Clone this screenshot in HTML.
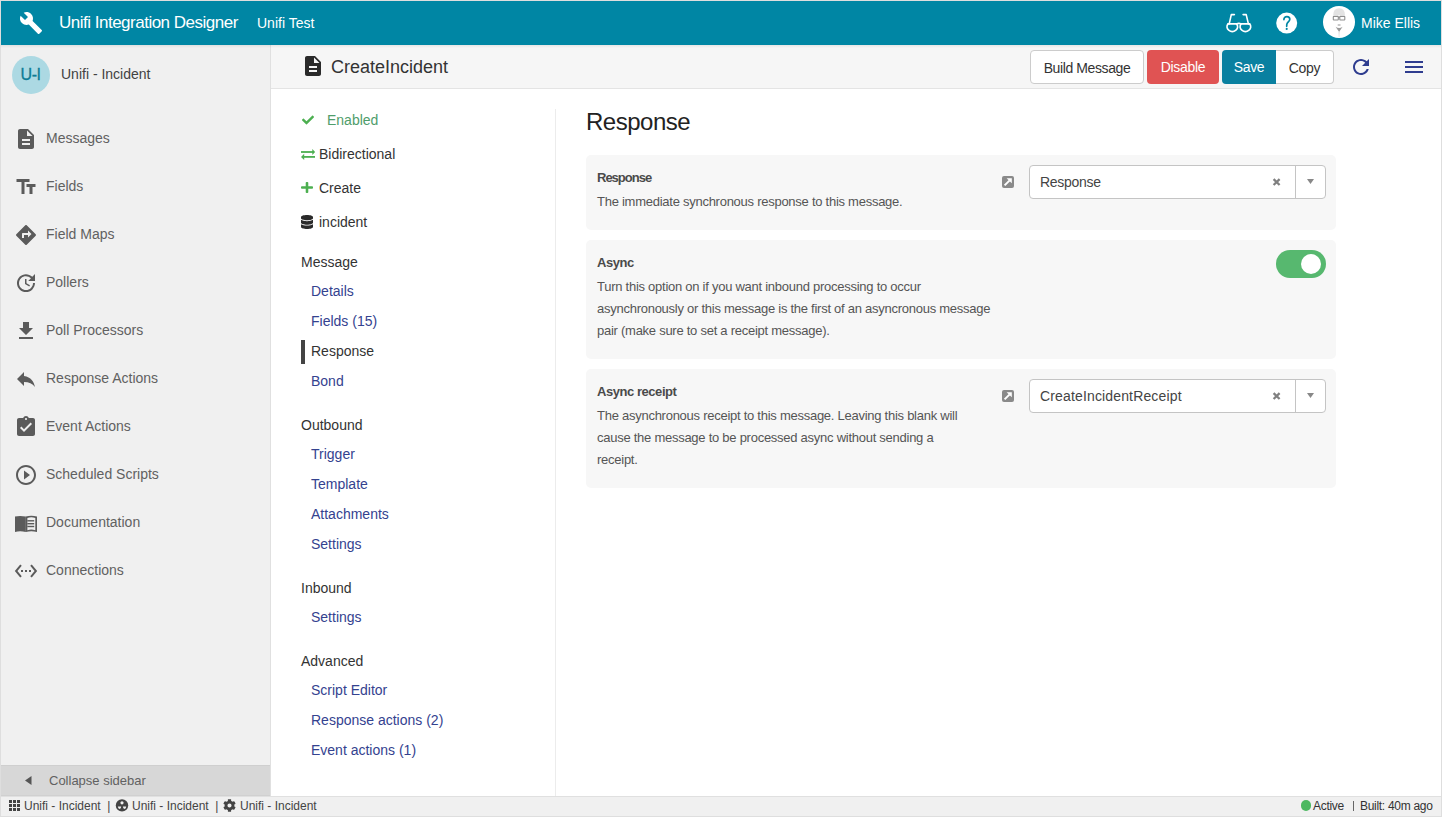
<!DOCTYPE html>
<html><head><meta charset="utf-8">
<style>
*{box-sizing:border-box;margin:0;padding:0}
html,body{width:1442px;height:817px;overflow:hidden;background:#fff;font-family:"Liberation Sans",sans-serif;position:relative}
.a{position:absolute}
.t{position:absolute;white-space:nowrap;line-height:1}
.nav{color:#616161;font-size:14px;left:46px}
.ni{position:absolute;left:14px;width:24px;height:24px}
.mn{position:absolute;font-size:14px;white-space:nowrap;line-height:1;left:311px}
.lnk{color:#34428f}
.hd{color:#333;left:301px}
.card{position:absolute;left:586px;width:750px;background:#f7f7f7;border-radius:5px}
.lbl{position:absolute;left:11px;font-size:13px;font-weight:bold;color:#4a4a4a;white-space:nowrap;line-height:1;letter-spacing:-0.3px}
.desc{position:absolute;left:11px;font-size:13px;color:#555;line-height:22px;white-space:nowrap;letter-spacing:-0.26px}
.sel{position:absolute;left:443px;top:10px;width:297px;height:34px;background:#fff;border:1px solid #c4c4c4;border-radius:4px}
.btn{position:absolute;top:50px;height:34px;font-size:14px;line-height:34px;text-align:center;white-space:nowrap}
</style></head><body>
<!-- top bar -->
<div class="a" style="left:1px;top:1px;width:1440px;height:44px;background:#0086a4"></div>
<svg class="a" style="left:19px;top:11px" width="24" height="24" viewBox="0 0 24 24"><path fill="#fff" d="M22.7 19l-9.1-9.1c.9-2.3.4-5-1.5-6.9-2-2-5-2.4-7.4-1.3L9 6 6 9 1.6 4.7C.4 7.1.9 10.1 2.9 12.1c1.9 1.9 4.6 2.4 6.9 1.5l9.1 9.1c.4.4 1 .4 1.4 0l2.3-2.3c.5-.4.5-1.1.1-1.4z"/></svg>
<div class="t" style="left:59px;top:14px;font-size:17px;color:#fff;letter-spacing:-0.5px">Unifi Integration Designer</div>
<div class="t" style="left:257px;top:16px;font-size:14px;color:#fff">Unifi Test</div>
<!-- glasses -->
<svg class="a" style="left:1222px;top:10px" width="34" height="26" viewBox="0 0 34 26"><g fill="none" stroke="#fff" stroke-width="1.6" stroke-linejoin="round" stroke-linecap="round"><path d="M6.1 13.9A5.35 4.65 0 1 0 14.5 13.9"/><path d="M19.2 13.9A5.35 4.65 0 1 0 27.6 13.9"/><path d="M6.1 13.9H14.5Q16.85 12.9 19.2 13.9H27.6"/><path d="M7.2 13.9L9.3 4.6H12.4"/><path d="M26.4 13.9L24.2 4.6H21.1"/></g></svg>
<!-- help -->
<svg class="a" style="left:1275px;top:12px" width="23" height="22" viewBox="0 0 23 22"><circle cx="11.7" cy="11.05" r="10.5" fill="#fff"/><path d="M8.9 7.6C8.9 5.6 10.2 4.6 11.9 4.6C13.7 4.6 14.8 5.8 14.8 7.3C14.8 9.5 12.2 10.2 11.8 12.4L11.7 14.2" fill="none" stroke="#0086a4" stroke-width="1.7" stroke-linecap="round"/><circle cx="11.7" cy="16.9" r="1.05" fill="#0086a4"/></svg>
<!-- avatar -->
<div class="a" style="left:1323px;top:6px;width:32px;height:32px;border-radius:50%;background:#fff;overflow:hidden">
  <svg width="32" height="32" viewBox="0 0 32 32"><path d="M10.2 9.2Q10.2 2.2 16.1 2.2Q22 2.2 22 9.2z" fill="#e3e3e3"/><g fill="none" stroke="#8e8e8e" stroke-width="1.1"><rect x="10.3" y="10.4" width="5" height="3.6" rx=".6"/><rect x="16.8" y="10.4" width="5" height="3.6" rx=".6"/><path d="M15.3 11.2h1.5"/></g><rect x="14.7" y="18" width="2.8" height="2" fill="#c9c9c9"/><path d="M12.6 20.8Q16.1 23.2 19.6 20.8L16.1 26z" fill="#9b9b9b"/><path d="M15.3 26h1.6l-.4 5h-.8z" fill="#e6e6e6"/></svg>
</div>
<div class="t" style="left:1361px;top:16px;font-size:14px;color:#fff">Mike Ellis</div>

<!-- sidebar -->
<div class="a" style="left:1px;top:45px;width:269px;height:751px;background:#f0f0f0"></div>
<div class="a" style="left:270px;top:45px;width:1px;height:751px;background:#e0e0e0"></div>
<div class="a" style="left:12px;top:56px;width:38px;height:38px;border-radius:50%;background:#acd9e3"></div>
<div class="t" style="left:11.5px;top:67px;width:38px;text-align:center;font-size:16px;color:#0f7d96;letter-spacing:-0.5px;-webkit-text-stroke:0.3px #0f7d96">U-I</div>
<div class="t" style="left:61px;top:67px;font-size:14px;color:#424242">Unifi - Incident</div>

<svg class="ni" style="top:127px" viewBox="0 0 24 24"><path fill="#5b5b5b" d="M14 2H6c-1.1 0-1.99.9-1.99 2L4 20c0 1.1.89 2 1.99 2H18c1.1 0 2-.9 2-2V8l-6-6zm2 16H8v-2h8v2zm0-4H8v-2h8v2zm-3-5V3.5L18.5 9H13z"/></svg>
<div class="t nav" style="top:131px">Messages</div>
<svg class="ni" style="top:175px" viewBox="0 0 24 24"><path fill="#5b5b5b" d="M2.5 4v3h5v12h3V7h5V4h-13zm19 5h-9v3h3v7h3v-7h3V9z"/></svg>
<div class="t nav" style="top:179px">Fields</div>
<svg class="ni" style="top:223px" viewBox="0 0 24 24"><path fill="#5b5b5b" d="M21.71 11.29l-9-9c-.39-.39-1.02-.39-1.41 0l-9 9c-.39.39-.39 1.02 0 1.41l9 9c.39.39 1.02.39 1.41 0l9-9c.39-.38.39-1.01 0-1.41zM14 14.5V12h-4v3H8v-4c0-.55.45-1 1-1h5V7.5l3.5 3.5-3.5 3.5z"/></svg>
<div class="t nav" style="top:227px">Field Maps</div>
<svg class="ni" style="top:271px" viewBox="0 0 24 24"><path fill="#5b5b5b" d="M21 10.12h-6.78l2.74-2.82c-2.73-2.7-7.15-2.8-9.88-.1-2.730 2.710-2.730 7.080 0 9.790s7.150 2.710 9.880 0C18.320 15.650 19 14.080 19 12.100h2c0 1.980-.88 4.550-2.640 6.290-3.510 3.480-9.210 3.480-12.720 0-3.500-3.470-3.530-9.110-.02-12.580s9.140-3.470 12.650 0L21 3v7.120zM12.500 8v4.250l3.500 2.080-.72 1.210L11 13V8h1.500z"/></svg>
<div class="t nav" style="top:275px">Pollers</div>
<svg class="ni" style="top:319px" viewBox="0 0 24 24"><path fill="#5b5b5b" d="M19 9h-4V3H9v6H5l7 7 7-7zM5 18v2h14v-2H5z"/></svg>
<div class="t nav" style="top:323px">Poll Processors</div>
<svg class="ni" style="top:367px" viewBox="0 0 24 24"><path fill="#5b5b5b" d="M10 9V5l-7 7 7 7v-4.1c5 0 8.5 1.6 11 5.1-1-5-4-10-11-11z"/></svg>
<div class="t nav" style="top:371px">Response Actions</div>
<svg class="ni" style="top:415px" viewBox="0 0 24 24"><path fill="#5b5b5b" d="M19 3h-4.18C14.4 1.84 13.3 1 12 1c-1.3 0-2.4.84-2.82 2H5c-1.1 0-2 .9-2 2v14c0 1.1.9 2 2 2h14c1.1 0 2-.9 2-2V5c0-1.1-.9-2-2-2zm-7 0c.55 0 1 .45 1 1s-.45 1-1 1-1-.45-1-1 .45-1 1-1zm-2 14l-4-4 1.41-1.41L10 14.17l6.59-6.59L18 9l-8 8z"/></svg>
<div class="t nav" style="top:419px">Event Actions</div>
<svg class="ni" style="top:463px" viewBox="0 0 24 24"><path fill="#5b5b5b" d="M10 16.5l6-4.5-6-4.5v9zM12 2C6.48 2 2 6.48 2 12s4.48 10 10 10 10-4.48 10-10S17.52 2 12 2zm0 18c-4.41 0-8-3.59-8-8s3.59-8 8-8 8 3.59 8 8-3.59 8-8 8z"/></svg>
<div class="t nav" style="top:467px">Scheduled Scripts</div>
<svg class="ni" style="top:511px" viewBox="0 0 24 24"><g fill="#5b5b5b"><path d="M1 5.6Q6 4.2 11.8 5.6V21Q6 19.6 1 21Z"/><path fill-rule="evenodd" d="M11.7 5.6Q17.3 3.9 23 5.6V21.1Q17.3 19.5 11.7 21.1ZM13.4 7V19.2Q17.3 18 21.3 19.2V7Q17.3 5.6 13.4 7Z"/><rect x="13.3" y="9.1" width="6.9" height="1.4"/><rect x="13.3" y="12" width="6.9" height="1.4"/><rect x="13.3" y="14.8" width="6.9" height="1.4"/></g></svg>
<div class="t nav" style="top:515px">Documentation</div>
<svg class="ni" style="top:559px" viewBox="0 0 24 24"><path fill="#5b5b5b" d="M7.77 6.76L6.23 5.48.82 12l5.41 6.52 1.54-1.28L3.42 12l4.35-5.24zM7 13h2v-2H7v2zm10-2h-2v2h2v-2zm-6 2h2v-2h-2v2zm6.77-7.52l-1.54 1.28L20.58 12l-4.35 5.24 1.54 1.28L23.18 12l-5.41-6.52z"/></svg>
<div class="t nav" style="top:563px">Connections</div>

<div class="a" style="left:1px;top:765px;width:269px;height:31px;background:#d7d7d7;border-top:1px solid #cfcfcf;border-bottom:1px solid #d0d0d0"></div>
<svg class="a" style="left:25px;top:776px" width="7" height="9" viewBox="0 0 7 9"><path d="M6.5 0v9L0 4.5z" fill="#555"/></svg>
<div class="t" style="left:49px;top:774px;font-size:13px;color:#616161">Collapse sidebar</div>

<!-- sub header -->
<div class="a" style="left:271px;top:45px;width:1170px;height:43px;background:#f6f6f6"></div>
<div class="a" style="left:271px;top:88px;width:1170px;height:1px;background:#e4e4e4"></div>
<div class="a" style="left:1px;top:45px;width:1440px;height:3px;background:linear-gradient(rgba(0,0,0,0.07),rgba(0,0,0,0))"></div>
<svg class="a" style="left:301px;top:54px" width="24" height="24" viewBox="0 0 24 24"><path fill="#2a2a2a" d="M14 2H6c-1.1 0-1.99.9-1.99 2L4 20c0 1.1.89 2 1.99 2H18c1.1 0 2-.9 2-2V8l-6-6zm2 16H8v-2h8v2zm0-4H8v-2h8v2zm-3-5V3.5L18.5 9H13z"/></svg>
<div class="t" style="left:331px;top:58px;font-size:18px;color:#333">CreateIncident</div>

<div class="btn" style="left:1030px;width:114px;background:#fff;border:1px solid #ccc;border-radius:4px;color:#333;letter-spacing:-0.4px">Build Message</div>
<div class="btn" style="left:1147px;width:72px;background:#e05353;border-radius:4px;color:#fff;letter-spacing:-0.3px">Disable</div>
<div class="btn" style="left:1222px;width:54px;background:#0a80a0;border-radius:4px 0 0 4px;color:#fff;letter-spacing:-0.3px">Save</div>
<div class="btn" style="left:1276px;width:58px;background:#fff;border:1px solid #ccc;border-left:none;border-radius:0 4px 4px 0;color:#333;letter-spacing:-0.3px">Copy</div>
<svg class="a" style="left:1349px;top:55px" width="24" height="24" viewBox="0 0 24 24"><path fill="#2f3d8f" d="M17.65 6.35C16.2 4.9 14.21 4 12 4c-4.42 0-7.99 3.58-7.99 8s3.57 8 7.99 8c3.73 0 6.84-2.55 7.73-6h-2.08c-.82 2.33-3.04 4-5.65 4-3.31 0-6-2.690-6-6s2.690-6 6-6c1.660 0 3.140.690 4.220 1.780L13 11h7V4l-2.350 2.350z"/></svg>
<div class="a" style="left:1405px;top:61px;width:18px;height:2px;background:#2f3d8f"></div>
<div class="a" style="left:1405px;top:66px;width:18px;height:2px;background:#2f3d8f"></div>
<div class="a" style="left:1405px;top:71px;width:18px;height:2px;background:#2f3d8f"></div>

<!-- middle nav -->
<div class="a" style="left:555px;top:109px;width:1px;height:687px;background:#ececec"></div>
<svg class="a" style="left:302px;top:115px" width="12" height="10" viewBox="0 65 512 382"><path fill="#4caf50" d="M173.898 439.404l-166.4-166.4c-9.997-9.997-9.997-26.206 0-36.204l36.203-36.204c9.997-9.998 26.207-9.998 36.204 0L192 312.69 432.095 72.596c9.997-9.997 26.207-9.997 36.204 0l36.203 36.204c9.997 9.997 9.997 26.206 0 36.204l-294.4 294.401c-9.998 9.997-26.207 9.997-36.204-.001z"/></svg>
<div class="t" style="left:327px;top:113px;font-size:14px;color:#4f9d6b">Enabled</div>
<svg class="a" style="left:300px;top:148px" width="16" height="12" viewBox="0 0 16 12"><g fill="#4caf50"><rect x="1" y="3.1" width="12" height="1.8"/><path d="M12.3 0.9L15.1 4L12.3 7.1z"/><rect x="3.5" y="8" width="11.5" height="1.8"/><path d="M4.2 5.8L1 8.9L4.2 12z"/></g></svg>
<div class="t" style="left:319px;top:147px;font-size:14px;color:#333">Bidirectional</div>
<svg class="a" style="left:301px;top:182px" width="12" height="11" viewBox="0 32 448 448" preserveAspectRatio="none"><path fill="#4caf50" d="M416 208H272V64c0-17.67-14.33-32-32-32h-32c-17.67 0-32 14.33-32 32v144H32c-17.67 0-32 14.33-32 32v32c0 17.67 14.33 32 32 32h144v144c0 17.67 14.330 32 32 32h32c17.670 0 32-14.330 32-32V304h144c17.670 0 32-14.330 32-32v-32c0-17.670-14.330-32-32-32z"/></svg>
<div class="t" style="left:319px;top:181px;font-size:14px;color:#333">Create</div>
<svg class="a" style="left:301px;top:215px" width="12" height="14" viewBox="0 0 448 512" preserveAspectRatio="none"><path fill="#2a2a2a" d="M448 73.143v45.714C448 159.143 347.667 192 224 192S0 159.143 0 118.857V73.143C0 32.857 100.333 0 224 0s224 32.857 224 73.143zM448 176v102.857C448 319.143 347.667 352 224 352S0 319.143 0 278.857V176c48.125 33.143 136.208 48.572 224 48.572S399.874 209.143 448 176zm0 160v102.857C448 479.143 347.667 512 224 512S0 479.143 0 438.857V336c48.125 33.143 136.208 48.572 224 48.572S399.874 369.143 448 336z"/></svg>
<div class="t" style="left:319px;top:215px;font-size:14px;color:#333">incident</div>

<div class="mn hd" style="top:255px">Message</div>
<div class="mn lnk" style="top:284px">Details</div>
<div class="mn lnk" style="top:314px">Fields (15)</div>
<div class="a" style="left:301px;top:340px;width:4px;height:24px;background:#444"></div>
<div class="mn" style="top:344px;color:#333">Response</div>
<div class="mn lnk" style="top:374px">Bond</div>
<div class="mn hd" style="top:418px">Outbound</div>
<div class="mn lnk" style="top:447px">Trigger</div>
<div class="mn lnk" style="top:477px">Template</div>
<div class="mn lnk" style="top:507px">Attachments</div>
<div class="mn lnk" style="top:537px">Settings</div>
<div class="mn hd" style="top:581px">Inbound</div>
<div class="mn lnk" style="top:610px">Settings</div>
<div class="mn hd" style="top:654px">Advanced</div>
<div class="mn lnk" style="top:683px">Script Editor</div>
<div class="mn lnk" style="top:713px">Response actions (2)</div>
<div class="mn lnk" style="top:743px">Event actions (1)</div>

<!-- main -->
<div class="t" style="left:586px;top:110px;font-size:24px;color:#222;letter-spacing:-0.5px">Response</div>

<div class="card" style="top:155px;height:75px">
  <div class="lbl" style="top:16px;letter-spacing:-1px">Response</div>
  <div class="desc" style="top:36px">The immediate synchronous response to this message.</div>
  <div class="a" style="left:416px;top:21px;width:12px;height:12px;background:#8a8a8a;border-radius:2px"></div>
  <svg class="a" style="left:416px;top:21px" width="12" height="12" viewBox="0 0 12 12"><path d="M2.6 9.4L7.4 4.6" fill="none" stroke="#fff" stroke-width="2"/><path d="M4.6 2.2H9.8V7.2z" fill="#fff"/></svg>
  <div class="sel"><div class="t" style="left:10px;top:9px;font-size:14px;color:#444;letter-spacing:-0.3px">Response</div>
    <svg class="a" style="left:242px;top:12px" width="9" height="8" viewBox="0 0 9 8"><path d="M1.6 1.2L7.6 7M7.6 1.2L1.6 7" stroke="#808080" stroke-width="2.3"/></svg>
    <div class="a" style="left:265px;top:0;width:1px;height:32px;background:#c4c4c4"></div>
    <svg class="a" style="left:277px;top:13px" width="7" height="5" viewBox="0 0 7 5"><path d="M0 0h7L3.5 5z" fill="#888"/></svg>
  </div>
</div>

<div class="card" style="top:240px;height:119px">
  <div class="lbl" style="top:16px;letter-spacing:-0.45px">Async</div>
  <div class="desc" style="top:36px">Turn this option on if you want inbound processing to occur<br>asynchronously or this message is the first of an asyncronous message<br>pair (make sure to set a receipt message).</div>
  <div class="a" style="left:690px;top:10px;width:50px;height:28px;border-radius:14px;background:#57b86f"></div>
  <div class="a" style="left:714.8px;top:14px;width:20.3px;height:20.3px;border-radius:50%;background:#fff"></div>
</div>

<div class="card" style="top:369px;height:119px">
  <div class="lbl" style="top:16px;letter-spacing:-0.45px">Async receipt</div>
  <div class="desc" style="top:36px">The asynchronous receipt to this message. Leaving this blank will<br>cause the message to be processed async without sending a<br>receipt.</div>
  <div class="a" style="left:416px;top:21px;width:12px;height:12px;background:#8a8a8a;border-radius:2px"></div>
  <svg class="a" style="left:416px;top:21px" width="12" height="12" viewBox="0 0 12 12"><path d="M2.6 9.4L7.4 4.6" fill="none" stroke="#fff" stroke-width="2"/><path d="M4.6 2.2H9.8V7.2z" fill="#fff"/></svg>
  <div class="sel"><div class="t" style="left:10px;top:9px;font-size:14px;color:#444;letter-spacing:0.15px">CreateIncidentReceipt</div>
    <svg class="a" style="left:242px;top:12px" width="9" height="8" viewBox="0 0 9 8"><path d="M1.6 1.2L7.6 7M7.6 1.2L1.6 7" stroke="#808080" stroke-width="2.3"/></svg>
    <div class="a" style="left:265px;top:0;width:1px;height:32px;background:#c4c4c4"></div>
    <svg class="a" style="left:277px;top:13px" width="7" height="5" viewBox="0 0 7 5"><path d="M0 0h7L3.5 5z" fill="#888"/></svg>
  </div>
</div>

<!-- footer -->
<div class="a" style="left:1px;top:796px;width:1440px;height:20px;background:#f0f0f0;border-top:1px solid #e0e0e0"></div>
<svg class="a" style="left:9px;top:800px" width="11" height="11" viewBox="0 0 11 11"><g fill="#444"><rect x="0" y="0" width="3" height="3"/><rect x="4" y="0" width="3" height="3"/><rect x="8" y="0" width="3" height="3"/><rect x="0" y="4" width="3" height="3"/><rect x="4" y="4" width="3" height="3"/><rect x="8" y="4" width="3" height="3"/><rect x="0" y="8" width="3" height="3"/><rect x="4" y="8" width="3" height="3"/><rect x="8" y="8" width="3" height="3"/></g></svg>
<div class="t" style="left:24px;top:800px;font-size:12px;color:#444">Unifi - Incident&nbsp; |</div>
<svg class="a" style="left:115px;top:798px" width="14" height="14" viewBox="0 0 14 14"><circle cx="7" cy="7.4" r="6.2" fill="#444"/><circle cx="7" cy="4.8" r="1.6" fill="#f0f0f0"/><path d="M2.9 8.6H6.2Q6.1 10.9 4.55 11.1Q3 10.9 2.9 8.6Z" fill="#f0f0f0"/><path d="M7.9 8.6H11.2Q11.1 10.9 9.55 11.1Q8 10.9 7.9 8.6Z" fill="#f0f0f0"/></svg>
<div class="t" style="left:132px;top:800px;font-size:12px;color:#444">Unifi - Incident&nbsp; |</div>
<svg class="a" style="left:223px;top:799px" width="13" height="13" viewBox="0 0 512 512"><path fill="#444" d="M487.4 315.7l-42.6-24.6c4.3-23.2 4.3-47 0-70.2l42.6-24.6c4.9-2.8 7.1-8.6 5.5-14-11.1-35.6-30-67.8-54.7-94.6-3.8-4.1-10-5.1-14.8-2.3L380.8 110c-17.9-15.4-38.5-27.3-60.8-35.1V25.8c0-5.6-3.9-10.5-9.4-11.7-36.7-8.2-74.3-7.8-109.2 0-5.5 1.2-9.4 6.1-9.4 11.7V75c-22.200 7.900-42.800 19.800-60.800 35.100L88.700 85.500c-4.900-2.800-11-1.900-14.800 2.300-24.700 26.700-43.600 58.900-54.700 94.600-1.700 5.400.6 11.200 5.500 14L67.300 221c-4.300 23.200-4.300 47 0 70.200l-42.600 24.600c-4.900 2.800-7.100 8.600-5.500 14 11.100 35.600 30 67.800 54.700 94.600 3.800 4.100 10 5.100 14.800 2.300l42.600-24.600c17.900 15.400 38.500 27.300 60.800 35.100v49.200c0 5.600 3.900 10.500 9.400 11.700 36.700 8.200 74.300 7.800 109.200 0 5.500-1.200 9.400-6.100 9.400-11.700v-49.200c22.200-7.900 42.800-19.800 60.800-35.100l42.600 24.600c4.900 2.800 11 1.900 14.800-2.300 24.700-26.700 43.600-58.900 54.700-94.600 1.500-5.500-.7-11.300-5.600-14.100zM256 336c-44.100 0-80-35.900-80-80s35.900-80 80-80 80 35.900 80 80-35.900 80-80 80z"/></svg>
<div class="t" style="left:240px;top:800px;font-size:12px;color:#444">Unifi - Incident</div>
<div class="a" style="left:1300.5px;top:800.2px;width:10.5px;height:10.5px;border-radius:50%;background:#4cb860"></div>
<div class="t" style="left:1313px;top:800px;font-size:12px;color:#333;letter-spacing:-0.3px">Active</div>
<div class="a" style="left:1353px;top:801px;width:1px;height:10px;background:#666"></div>
<div class="t" style="left:1360px;top:800px;font-size:12px;color:#333;letter-spacing:-0.3px">Built: 40m ago</div>

<!-- page border -->
<div class="a" style="left:0;top:0;width:1442px;height:817px;border:1px solid #dedede;pointer-events:none"></div>
</body></html>
